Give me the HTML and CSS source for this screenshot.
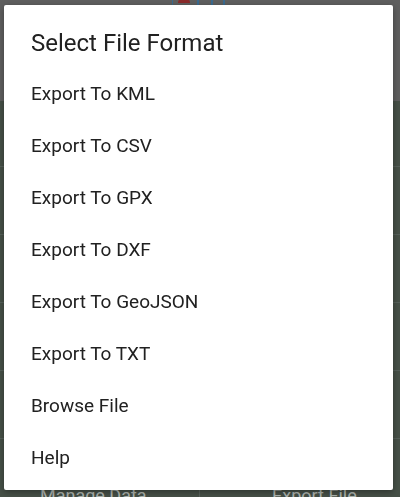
FILE: index.html
```html
<!DOCTYPE html>
<html>
<head>
<meta charset="utf-8">
<link rel="stylesheet" href="styles.css">
</head>
<body>
<div class="app">
  <header class="top">
    <svg class="logo" width="70" height="20" viewBox="0 0 70 20">
      <path d="M6 4 a6 6 0 0 1 12 0 z" fill="#8a2a2a"/>
      <path d="M0 0 V10 M26 0 V10 M40 0 V10 M52 0 V10" stroke="#2f6fa0" stroke-width="1.5" fill="none"/>
    </svg>
  </header>
  <ul class="rows">
    <li></li><li></li><li></li><li></li><li></li>
  </ul>
  <footer class="bottom">
    <span class="tab tab-left">Manage Data</span>
    <span class="tab tab-right">Export File</span>
  </footer>
</div>
<div class="dialog">
  <h1 class="title">Select File Format</h1>
  <ul class="options">
    <li>Export To KML</li>
    <li>Export To CSV</li>
    <li>Export To GPX</li>
    <li>Export To DXF</li>
    <li>Export To GeoJSON</li>
    <li>Export To TXT</li>
    <li>Browse File</li>
    <li>Help</li>
  </ul>
</div>
</body>
</html>
```
FILE: styles.css
```css
html, body {
  margin: 0;
  padding: 0;
  height: 100%;
  overflow: hidden;
}
body {
  font-family: Roboto, "Noto Sans", sans-serif;
  background: #465047;
}
.app {
  display: flex;
  flex-direction: column;
  height: 497px;
}
.top {
  height: 101px;
  background: #5f5f5f;
  position: relative;
}
.logo {
  position: absolute;
  left: 172px;
  top: -1px;
}
.rows {
  list-style: none;
  margin: 0;
  padding: 0;
  flex: 1;
}
.rows li {
  height: 67px;
  border-bottom: 1px solid #56605a;
}
.rows li:first-child {
  height: 65px;
}
.bottom {
  height: 30px;
  display: flex;
  background: #465047;
}
.tab {
  width: 50%;
  box-sizing: border-box;
  color: #aeb5b0;
  font-size: 18px;
  line-height: 22px;
  padding-top: 18px;
}
.tab-left {
  padding-left: 40px;
  border-right: 1px solid #5a625c;
}
.tab-right {
  padding-left: 72px;
}
.dialog {
  position: fixed;
  left: 4px;
  top: 5px;
  width: 389px;
  height: 485px;
  background: #ffffff;
  border-radius: 2px;
  box-shadow: 0 2px 6px rgba(0,0,0,0.35);
}
.title {
  margin: 0;
  padding: 24px 27px 11px;
  font-size: 24px;
  line-height: 28px;
  font-weight: 400;
  color: #212121;
}
.options {
  list-style: none;
  margin: 0;
  padding: 0;
}
.options li {
  height: 52px;
  line-height: 52px;
  padding-left: 27px;
  font-size: 19px;
  color: #212121;
}
```
